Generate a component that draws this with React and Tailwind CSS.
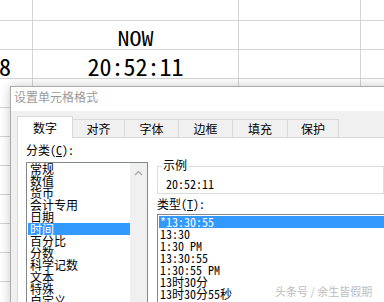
import React from "react";

const cats = ["常规", "数值", "货币", "会计专用", "日期", "时间", "百分比", "分数", "科学记数", "文本", "特殊", "自定义"];
const types = ["*13:30:55", "13:30", "1:30 PM", "13:30:55", "1:30:55 PM", "13时30分", "13时30分55秒"];
const tabs = [
  { t: "数字", w: "w-[56px]" },
  { t: "对齐", w: "w-[52px]" },
  { t: "字体", w: "w-[54px]" },
  { t: "边框", w: "w-[54px]" },
  { t: "填充", w: "w-[55px]" },
  { t: "保护", w: "w-[51px]" },
];

function Cell({ children, className = "" }) {
  return <div className={"border-r border-b border-[#d4d4d4] " + className}>{children}</div>;
}

export default function App() {
  const rows = Array.from({ length: 10 });
  return (
    <div className="relative w-[384px] h-[302px] overflow-hidden bg-white text-black font-['Noto_Sans_Mono_CJK_SC','Noto_Sans_CJK_SC','Liberation_Mono',monospace]">
      <div className="grid grid-cols-[33px_206px_122px_60px] grid-rows-[21px_repeat(10,29px)]">
        {rows.map((_, r) => (
          <React.Fragment key={r}>
            <Cell className="flex items-end overflow-hidden">
              {r === 2 && <span className="-ml-px text-[24px] leading-[24px]">8</span>}
            </Cell>
            <Cell className={"flex items-end justify-center " + (r === 1 ? "pb-px" : "")}>
              {r === 1 && <span className="text-[24px] leading-[24px] inline-block origin-bottom scale-y-[0.82]">NOW</span>}
              {r === 2 && <span className="text-[24px] leading-[24px]">20:52:11</span>}
            </Cell>
            <Cell />
            <Cell />
          </React.Fragment>
        ))}
      </div>

      <div className="absolute left-[10px] top-[86px] w-[420px] h-[240px] border border-[#ababab] bg-[#f0f0f0] shadow-[0_0_10px_rgba(0,0,0,0.22)] text-[12px] leading-[12px]">
        <div className="h-[24px] bg-white pl-[3px] pt-[4px] text-[#9a9a9a]">设置单元格格式</div>
        <div className="pt-[5px] pl-[6px]">
          <div className="flex items-end h-[21px]">
            {tabs.map((tb, i) =>
              i === 0 ? (
                <div key={i} className={"relative z-10 -mb-px h-[22px] bg-white border-l border-r border-t border-[#d9d9d9] flex justify-center pt-[5px] " + tb.w}>
                  {tb.t}
                </div>
              ) : (
                <div key={i} className={"h-[18px] bg-[#f0f0f0] border-r border-t border-[#d9d9d9] flex justify-center pt-[3px] " + tb.w}>
                  {tb.t}
                </div>
              )
            )}
          </div>
          <div className="border border-[#d9d9d9] bg-white h-[200px] flex">
            <div className="ml-[8px] w-[122px] pt-[6px] flex flex-col">
              <div>
                分类(<span className="underline">C</span>):
              </div>
              <div className="mt-[6px] h-[160px] border border-[#828790] flex">
                <div className="flex-1 pl-px flex flex-col">
                  {cats.map((c, i) => (
                    <div key={i} className={"h-[12px] pl-[2px] whitespace-nowrap " + (i === 5 ? "bg-[#3399ff] text-white" : "")}>
                      {c}
                    </div>
                  ))}
                </div>
                <div className="w-[17px] bg-[#f0f0f0] flex justify-center pt-[7px]">
                  <svg width="9" height="6" viewBox="0 0 9 6">
                    <path d="M1 5 L4.5 1.5 L8 5" fill="none" stroke="#a8a8a8" strokeWidth="1.4" />
                  </svg>
                </div>
              </div>
            </div>
            <div className="ml-[9px] pt-[28px] flex flex-col">
              <div className="relative w-[227px] h-[28px] border border-[#dcdcdc] pt-[11px] pl-[8px]">
                <span className="absolute top-[-8px] left-[4px] px-px bg-white">示例</span>
                <div>20:52:11</div>
              </div>
              <div className="mt-[4px]">
                类型(<span className="underline">T</span>):
              </div>
              <div className="mt-[4px] w-[240px] h-[120px] border border-[#828790] pt-px pl-px">
                {types.map((t, i) => (
                  <div key={i} className={"h-[12px] pl-px whitespace-nowrap " + (i === 0 ? "bg-[#3399ff] text-white" : "")}>
                    {t}
                  </div>
                ))}
              </div>
            </div>
          </div>
        </div>
      </div>

      <div className="absolute left-[275px] top-[285px] text-[11px] leading-[12px] text-[#bdbdbd] font-['Noto_Sans_CJK_SC',sans-serif] whitespace-nowrap [text-shadow:0_0_1px_#ffffff]">
        头条号 / 余生皆假期
      </div>
    </div>
  );
}
